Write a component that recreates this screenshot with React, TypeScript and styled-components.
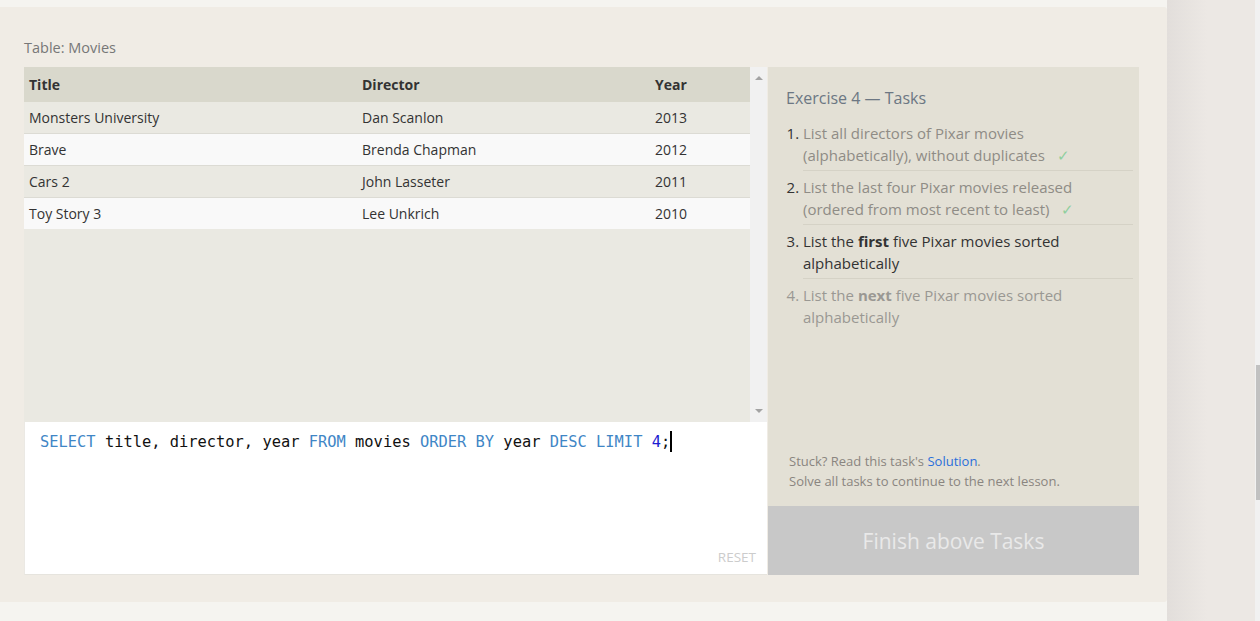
import React from "react"
import styled, { createGlobalStyle } from "styled-components"

const GlobalStyle = createGlobalStyle`
    html, body {
        margin: 0;
        padding: 0;
        height: 100%;
    }
    body {
        background: #ede8e4;
        font-family: "Open Sans", "Noto Sans", sans-serif;
        overflow: hidden;
    }
`

const movies = [
    { title: "Monsters University", director: "Dan Scanlon", year: 2013 },
    { title: "Brave", director: "Brenda Chapman", year: 2012 },
    { title: "Cars 2", director: "John Lasseter", year: 2011 },
    { title: "Toy Story 3", director: "Lee Unkrich", year: 2010 },
]

const tasks: { state: "done" | "active" | "todo", body: React.ReactNode }[] = [
    { state: "done", body: <>List all directors of Pixar movies<br />(alphabetically), without duplicates</> },
    { state: "done", body: <>List the last four Pixar movies released<br />(ordered from most recent to least)</> },
    { state: "active", body: <>List the <b>first</b> five Pixar movies sorted<br />alphabetically</> },
    { state: "todo", body: <>List the <b>next</b> five Pixar movies sorted<br />alphabetically</> },
]

const App: React.FC = (): JSX.Element => {
    return (
        <>
            <GlobalStyle />
            <Page>
                <Main>
                    <Card>
                        <TableLabel>Table: Movies</TableLabel>
                        <Workspace>
                            <LeftColumn>
                                <TablePane>
                                    <TableScroll>
                                        <Table>
                                            <colgroup>
                                                <col style={{ width: 333 }} />
                                                <col style={{ width: 293 }} />
                                                <col />
                                            </colgroup>
                                            <thead>
                                                <tr>
                                                    <Th>Title</Th>
                                                    <Th>Director</Th>
                                                    <Th>Year</Th>
                                                </tr>
                                            </thead>
                                            <tbody>
                                                {movies.map((m, i) => (
                                                    <Row key={m.title} $odd={i % 2 === 0} $last={i === movies.length - 1}>
                                                        <Td>{m.title}</Td>
                                                        <Td>{m.director}</Td>
                                                        <Td>{m.year}</Td>
                                                    </Row>
                                                ))}
                                            </tbody>
                                        </Table>
                                    </TableScroll>
                                    <ScrollTrack>
                                        <Arrow $dir="up" />
                                        <Arrow $dir="down" />
                                    </ScrollTrack>
                                </TablePane>
                                <Editor>
                                    <Code>
                                        <Kw>SELECT</Kw> title, director, year <Kw>FROM</Kw> movies <Kw>ORDER BY</Kw> year <Kw>DESC</Kw> <Kw>LIMIT</Kw> <Num>4</Num>;<Cursor />
                                    </Code>
                                    <Reset>RESET</Reset>
                                </Editor>
                            </LeftColumn>
                            <TaskPanel>
                                <TaskBody>
                                    <TaskTitle>Exercise 4 — Tasks</TaskTitle>
                                    <TaskList>
                                        {tasks.map((t, i) => (
                                            <TaskItem key={i} $state={t.state} $last={i === tasks.length - 1}>
                                                {t.body}
                                                {t.state === "done" && <Check>✓</Check>}
                                            </TaskItem>
                                        ))}
                                    </TaskList>
                                </TaskBody>
                                <Hint>
                                    Stuck? Read this task's <HintLink>Solution</HintLink>.<br />
                                    Solve all tasks to continue to the next lesson.
                                </Hint>
                                <FinishButton>Finish above Tasks</FinishButton>
                            </TaskPanel>
                        </Workspace>
                    </Card>
                </Main>
                <SideShade />
                <PageScrollbar>
                    <PageThumb />
                </PageScrollbar>
            </Page>
        </>
    )
}

export default App

const Page = styled.div`
    display: flex;
    height: 621px;
`

const Main = styled.div`
    width: 1167px;
    flex: none;
    background: #f5f4f0;
    padding: 7px 0 19px;
    box-sizing: border-box;
`

const Card = styled.div`
    height: 595px;
    box-sizing: border-box;
    background: #f0ece5;
    border-radius: 0 3px 3px 0;
    padding: 30px 28px 27px 24px;
    display: flex;
    flex-direction: column;
`

const TableLabel = styled.div`
    font-size: 14.5px;
    line-height: 22px;
    color: #777;
    margin-bottom: 8px;
`

const Workspace = styled.div`
    display: flex;
    gap: 1px;
    height: 508px;
`

const LeftColumn = styled.div`
    width: 743px;
    display: flex;
    flex-direction: column;
`

const TablePane = styled.div`
    display: flex;
    height: 355px;
    flex: none;
`

const TableScroll = styled.div`
    flex: 1;
    background: #eae9e2;
`

const Table = styled.table`
    width: 100%;
    border-collapse: collapse;
    table-layout: fixed;
    font-size: 14px;
    color: #333;
`

const Th = styled.th`
    text-align: left;
    font-weight: 700;
    background: #d9d8cc;
    height: 35px;
    padding: 0 5px;
    color: #333;
`

const Row = styled.tr<{ $odd: boolean, $last: boolean }>`
    background: ${p => (p.$odd ? "#eae9e2" : "#f9f9f9")};
    border-bottom: ${p => (p.$last ? "none" : "1px solid #dcdbd4")};
`

const Td = styled.td`
    height: 31px;
    padding: 0 5px;
`

const ScrollTrack = styled.div`
    width: 17px;
    background: #f1f1f1;
    display: flex;
    flex-direction: column;
    justify-content: space-between;
    align-items: center;
    padding: 5px 0;
    box-sizing: border-box;
`

const Arrow = styled.div<{ $dir: "up" | "down" }>`
    width: 0;
    height: 0;
    border-left: 4px solid transparent;
    border-right: 4px solid transparent;
    ${p => (p.$dir === "up" ? "border-bottom: 4px solid #a3a3a3;" : "border-top: 4px solid #a3a3a3;")}
    margin: 4px 0;
`

const Editor = styled.div`
    flex: 1;
    background: #fff;
    border-left: 1px solid #ebe9e4;
    border-bottom: 1px solid #e6e4de;
    display: flex;
    flex-direction: column;
    padding: 9px 11px 8px 15px;
`

const Code = styled.div`
    flex: 1;
    font-family: "DejaVu Sans Mono", "Liberation Mono", monospace;
    font-size: 15.4px;
    line-height: 22px;
    color: #111;
    white-space: pre;
`

const Kw = styled.span`
    color: #3f86c6;
`

const Num = styled.span`
    color: #1d1dd0;
`

const Cursor = styled.span`
    display: inline-block;
    width: 2px;
    height: 21px;
    background: #000;
    vertical-align: -5px;
`

const Reset = styled.div`
    align-self: flex-end;
    font-size: 13.5px;
    color: #cccccc;
    line-height: 18px;
`

const TaskPanel = styled.div`
    width: 371px;
    background: #e3e0d5;
    display: flex;
    flex-direction: column;
`

const TaskBody = styled.div`
    flex: 1;
    padding: 20px 6px 0 18px;
`

const TaskTitle = styled.div`
    font-size: 16px;
    line-height: 22px;
    color: #6c7783;
    margin-bottom: 8px;
`

const TaskList = styled.ol`
    margin: 0;
    padding: 0 0 0 17px;
    font-size: 15px;
`

const TaskItem = styled.li<{ $state: "done" | "active" | "todo", $last: boolean }>`
    line-height: 22px;
    padding: 5px 0 4px;
    border-bottom: ${p => (p.$last ? "none" : "1px solid #d5d2c6")};
    color: ${p => (p.$state === "active" ? "#333" : p.$state === "done" ? "#8f8c86" : "#9a9893")};
    &::marker {
        color: ${p => (p.$state === "todo" ? "#9a9893" : "#333")};
    }
`

const Check = styled.span`
    color: #8fcf9e;
    margin-left: 12px;
`

const Hint = styled.div`
    font-size: 13px;
    line-height: 20px;
    color: #8a8580;
    padding: 0 10px 15px 21px;
`

const HintLink = styled.span`
    color: #2a6fdb;
`

const FinishButton = styled.div`
    height: 69px;
    background: #c8c8c8;
    color: #e9e9e9;
    font-size: 21px;
    display: flex;
    align-items: center;
    justify-content: center;
`

const SideShade = styled.div`
    flex: 1;
    background: linear-gradient(to right, #e2dedb, #ece8e4 40px);
`

const PageScrollbar = styled.div`
    width: 5px;
    background: #f1f1f1;
    padding-top: 365px;
    box-sizing: border-box;
`

const PageThumb = styled.div`
    margin-left: 1px;
    height: 135px;
    background: #c1c1c1;
`
